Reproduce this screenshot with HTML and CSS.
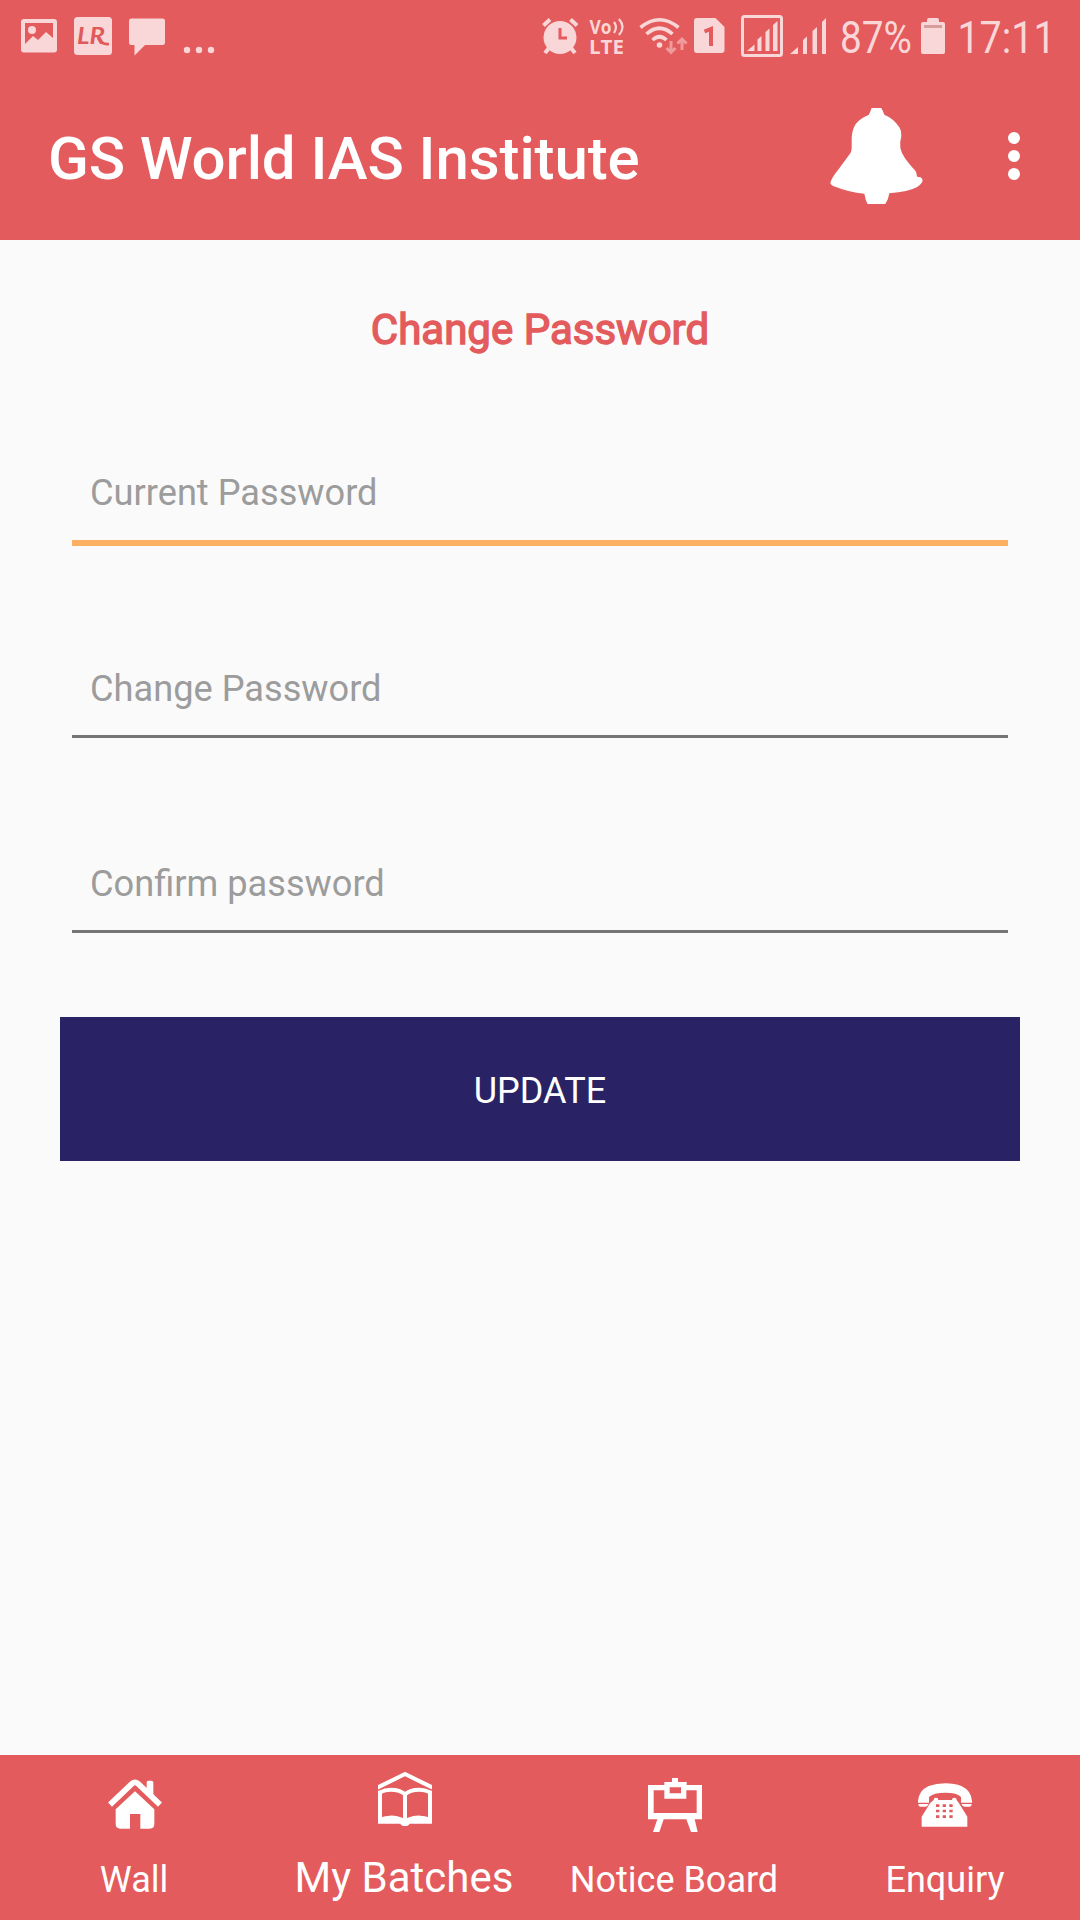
FILE: index.html
```html
<!DOCTYPE html>
<html lang="en">
<head>
<meta charset="utf-8">
<title>GS World IAS Institute</title>
<link rel="stylesheet" href="styles.css">
</head>
<body>
<div class="status">
  <svg class="s-photo" width="36" height="72" viewBox="21 0 36 72"><path fill-rule="evenodd" d="M24 19h30q3 0 3 3v27.500q0 3-3 3H24q-3 0-3-3V22q0-3 3-3zM25 23v21l8-8 5 4 8-8 7 6V23z"/><circle cx="32" cy="30" r="4"/></svg>
  <svg class="s-lr" width="38" height="72" viewBox="74 0 38 72"><rect x="74" y="17" width="38" height="38" rx="3.500"/><text class="lr" x="77" y="43.500" textLength="28" lengthAdjust="spacingAndGlyphs">LR</text><path class="tail" d="M98 38q4 7 11 6"/></svg>
  <svg class="s-chat" width="36" height="72" viewBox="129 0 36 72"><path d="M131.500 18.500h31q2.500 0 2.500 2.500v21.500q0 2.500-2.500 2.500H145l-10.500 10.500V45h-3q-2.500 0-2.500-2.500V21q0-2.500 2.500-2.500z"/></svg>
  <svg class="s-more" width="30" height="72" viewBox="184 0 30 72"><circle cx="187" cy="50" r="3.200"/><circle cx="199" cy="50" r="3.200"/><circle cx="211" cy="50" r="3.200"/></svg>
  <svg class="s-alarm" width="37" height="72" viewBox="542 0 37 72"><circle cx="560" cy="37.500" r="16.500"/><path class="line" d="M543.500 25.500l6.500-6M577 25.500l-6.500-6M549 48l-4 5M571 48l4 5"/><path class="cut" d="M560 28v10h7"/></svg>
  <svg class="s-volte" width="35" height="72" viewBox="589 0 35 72"><text class="vo" x="589.500" y="33.500" textLength="22" lengthAdjust="spacingAndGlyphs">Vo</text><path class="thin" d="M614 22q4 5 0 11M619 19q7 8 0 16"/><text class="vo lte" x="589" y="53.500" textLength="35" lengthAdjust="spacingAndGlyphs">LTE</text></svg>
  <svg class="s-wifi" width="48" height="72" viewBox="639 0 48 72"><path class="wave" d="M640.500 27.500Q659.500 12 678.500 27.500M646.500 34Q659.500 22.500 672.500 34M652.500 40Q659.500 33.500 666.500 40"/><circle cx="659.500" cy="45" r="2.800"/><path class="faint" d="M671 41v11M666.500 48l4.500 4.500 4.500-4.500M682 50V39.500M677.500 43.500l4.500-4.500 4.500 4.500"/></svg>
  <svg class="s-sim" width="32" height="72" viewBox="693 0 32 72"><path d="M697 18h18.500l9 9v23q0 3-3 3H697q-3 0-3-3V21q0-3 3-3z"/><path class="one" d="M704.500 31.500l6.500-2.500V46"/></svg>
  <svg class="s-sig1" width="42" height="72" viewBox="741 0 42 72"><rect class="frame" x="742.500" y="16.500" width="39" height="39" rx="2"/><path d="M747 51l7.500-6.500V51zM757.500 39.500l4-3.500v15h-4zM765.500 32l4-3.500V51h-4zM773 25l4.500-4v30H773z"/></svg>
  <svg class="s-sig2" width="36" height="72" viewBox="790 0 36 72"><path d="M790 54l8-7v7zM803 40l4-3.500V54h-4zM812.500 31l4.500-4v27h-4.500zM822 22l4-4v36h-4z"/></svg>
  <svg class="s-pct" width="72" height="72" viewBox="840 0 72 72"><text class="num" x="840" y="53" textLength="72" lengthAdjust="spacingAndGlyphs">87%</text></svg>
  <svg class="s-batt" width="24" height="72" viewBox="921 0 24 72"><path d="M927 22v-2q0-2 2-2h8q2 0 2 2v2h4q2 0 2 2v28q0 2-2 2h-20q-2 0-2-2V24q0-2 2-2z"/><path class="level" d="M924 25h18v3h-18z"/></svg>
  <svg class="s-time" width="102" height="72" viewBox="956 0 102 72"><text class="num" x="957.500" y="53" textLength="98" lengthAdjust="spacingAndGlyphs">17:11</text></svg>
</div>
<header class="appbar">
  <h1>GS World IAS Institute</h1>
  <svg class="bell" width="93" height="96" viewBox="150 84 279 288"><path d="M275 84H304Q308 91 313 104Q342 116 358 142Q365 152 364 168Q359 186 361 204Q364 220 376 236Q392 258 406 272Q411 279 411 290Q426 290 428 300Q427 312 410 322Q386 335 328 340Q325 360 316 372H263Q256 360 253 341Q206 337 168 321Q152 316 151 308Q156 292 174 270Q196 240 212 218Q216 210 215 186Q214 152 227 132Q244 112 266 105Q271 95 275 84Z"/></svg>
  <svg class="dots" width="12" height="48" viewBox="0 0 12 48"><circle cx="6" cy="6" r="6"/><circle cx="6" cy="24" r="6"/><circle cx="6" cy="42" r="6"/></svg>
</header>
<main>
  <h2>Change Password</h2>
  <form>
    <input class="field active" type="text" placeholder="Current Password">
    <input class="field" type="text" placeholder="Change Password">
    <input class="field" type="text" placeholder="Confirm password">
    <button type="button">UPDATE</button>
  </form>
</main>
<nav>
  <a class="tab">
    <svg class="i-home" width="54" height="54" viewBox="0 0 162 162"><path class="roof" d="M6 80L72 17q9-8 18 0l66 63"/><path d="M116 13q0-5 5-5h9q6 0 6 5v41l-20-19zM81 40l58 54v44q0 14-14 14H97v-44H66v44H37q-14 0-14-14V94z"/></svg>
    <span>Wall</span>
  </a>
  <a class="tab current">
    <svg class="i-book" width="54" height="54" viewBox="0 0 162 162"><path class="out" d="M-2 47L81 6l83 41"/><path class="out" d="M6 151V61q16-8 32-8 28 0 43 14 15-14 43-14 16 0 32 8v90M81 65v92"/><path d="M0 138q43-14 68-2 7 3 13 3t13-3q25-12 68 2v17H95q-3 7-14 7t-14-7H0z"/></svg>
    <span>My Batches</span>
  </a>
  <a class="tab">
    <svg class="i-board" width="54" height="54" viewBox="0 0 162 162"><path fill-rule="evenodd" d="M0 21h49v-9h23V0h18v12h26v9h46v103h-22l9 38h-20l-14-38H47l-13 38H15l13-38H0zM17 37v68h129V37h-31v25H49V37zM65 28v18h34V28z"/></svg>
    <span>Notice Board</span>
  </a>
  <a class="tab">
    <svg class="i-phone" width="54" height="54" viewBox="0 0 162 162"><path d="M0 69Q2 38 32 24 55 16 82 16q28 0 48 8 30 14 32 45v5h-33V57q-11-13-47-13T33 57v17H0zM1 78h31q-3 8-10 8H7q-6 0-6-8zM130 78h31q0 8-6 8h-15q-7 0-10-8zM47 66q0-7 7-7t7 7h41q0-7 7-7t7 7l7 10 25 40v30H11v-30l25-40z"/><path class="keys" d="M54 83h10M74 83h10M94 83h10M54 99h10M74 99h10M94 99h10M54 116h10M74 116h10M94 116h10"/></svg>
    <span>Enquiry</span>
  </a>
</nav>
</body>
</html>
```
FILE: styles.css
```css
* { box-sizing: border-box; }
body {
  margin: 0;
  width: 1080px;
  height: 1920px;
  display: flex;
  flex-direction: column;
  background: #fafafa;
  font-family: Roboto, sans-serif;
  overflow: hidden;
}
svg { display: block; flex: none; }

.status {
  height: 72px;
  display: flex;
  padding-left: 21px;
  background: #e35b5c;
  fill: #f9d6d7;
}
.status svg { overflow: visible; }
.s-lr { margin-left: 17px; }
.s-chat { margin-left: 17px; }
.s-more { margin-left: 19px; }
.s-alarm { margin-left: 328px; }
.s-volte { margin-left: 10px; }
.s-wifi { margin-left: 15px; }
.s-sim { margin-left: 6px; }
.s-sig1 { margin-left: 16px; }
.s-sig2 { margin-left: 7px; }
.s-pct { margin-left: 14px; }
.s-batt { margin-left: 9px; }
.s-time { margin-left: 11px; }
.lr { font: italic 700 22px Lato, sans-serif; fill: #e0595b; }
.tail { fill: none; stroke: #e0595b; stroke-width: 2.6; }
.vo { font: 700 19px "Open Sans", sans-serif; }
.lte { font-size: 20px; }
.num { font-size: 45px; }
.line { fill: none; stroke: #f9d6d7; stroke-width: 4; }
.cut { fill: none; stroke: #e35b5c; stroke-width: 3; }
.thin { fill: none; stroke: #f9d6d7; stroke-width: 2.2; }
.wave { fill: none; stroke: #f9d6d7; stroke-width: 3.6; }
.faint { fill: none; stroke: #f09a9b; stroke-width: 3; }
.one { fill: none; stroke: #e35b5c; stroke-width: 4; }
.frame { fill: none; stroke: #f9d6d7; stroke-width: 3; }
.level { fill: #d99c9d; }

.appbar {
  height: 168px;
  display: flex;
  align-items: center;
  padding: 0 60px 0 48px;
  background: #e35b5c;
  fill: #fff;
}
h1 {
  flex: 1;
  margin: 6px 0 0;
  color: #fff;
  font-size: 60px;
  font-weight: 500;
  line-height: 70px;
  letter-spacing: -.1px;
  white-space: nowrap;
}
.bell { margin-right: 85px; }

main { flex: 1; padding: 65px 60px 0; }
h2 {
  margin: 0;
  text-align: center;
  color: #e35b5c;
  font-size: 42px;
  font-weight: 400;
  line-height: 50px;
  -webkit-text-stroke: 1.4px #e35b5c;
}
form { display: flex; flex-direction: column; padding-top: 87px; }
.field {
  height: 106px;
  margin: 0 12px 89px;
  padding: 9px 18px 0;
  border: 0;
  border-bottom: 3px solid #757575;
  background: transparent;
  font: 400 36.200px Roboto, sans-serif;
  outline: none;
}
.field.active { height: 104px; padding-top: 3px; border-bottom: 6px solid #fdb062; margin-bottom: 86px; }
.field::placeholder { color: #9c9c9c; opacity: 1; }
button {
  height: 144px;
  margin-top: -5px;
  padding: 4px 0 0;
  border: 0;
  background: #292365;
  color: #fff;
  font: 400 36px Roboto, sans-serif;
}

nav {
  height: 165px;
  display: grid;
  grid-template-columns: repeat(4, 270px);
  background: #e35b5c;
}
.tab {
  display: flex;
  flex-direction: column;
  justify-content: space-between;
  align-items: center;
  padding: 23px 0 19px;
  color: #fff;
  fill: #fff;
  font-size: 36px;
  line-height: 42px;
}
.tab span { margin-right: 2px; }
.tab:last-child span { margin-right: 0; }
.tab.current { padding-top: 17px; padding-bottom: 17px; font-size: 42px; line-height: 50px; }
.roof { fill: none; stroke: #fff; stroke-width: 17; }
.out { fill: none; stroke: #fff; stroke-width: 12; }
.keys { stroke: #e35b5c; stroke-width: 8; }
```
